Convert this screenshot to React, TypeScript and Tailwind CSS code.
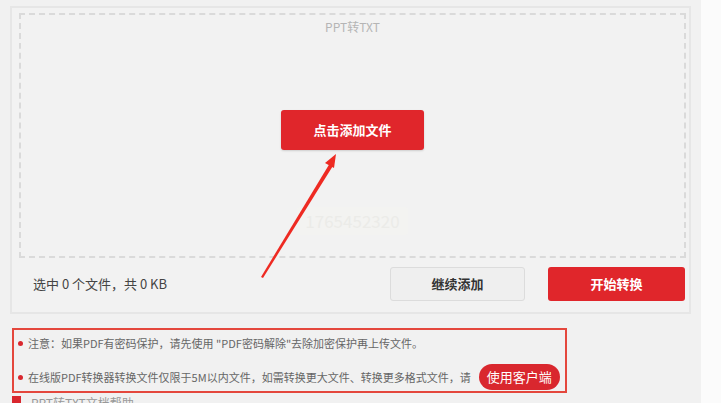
import React from 'react';

const cjk = { fontFamily: '"Microsoft YaHei", "Noto Sans CJK SC", "Noto Sans", sans-serif' };

function Arrow() {
  return (
    <svg className="pointer-events-none absolute left-0 top-0" width="721" height="403" viewBox="0 0 721 403">
      <path d="M261 277 L330 163 L333.5 165 L263 278 Z" fill="#ee2a22" />
      <path d="M336 154 L325 163 L334 168 Z" fill="#ee2a22" />
    </svg>
  );
}

export default function App() {
  return (
    <div className="relative flex h-[403px] w-[721px] overflow-hidden bg-[#f1f1f1]" style={cjk}>
      <div className="w-[701px] pl-[10px] pt-[6px]">
        {/* main panel */}
        <div className="flex h-[308px] w-[681px] flex-col border-2 border-[#e6e6e6] bg-[#f2f2f2] pl-[7px] pr-[3px] pt-[5px]">
          <div className="relative flex h-[245px] w-[667px] flex-col items-center border-2 border-dashed border-[#dadada]">
            <div className="mt-[3px] text-[12px] leading-[18px] text-[#b5b5b5]">PPT转TXT</div>
            <button className="mt-[74px] h-[40px] w-[143px] rounded-[3px] bg-[#e0262b] text-[13px] font-bold text-white shadow-[0_1px_2px_rgba(0,0,0,0.15)]">
              点击添加文件
            </button>
            <div className="mt-[57px] rounded-[3px] bg-[#f3f3f1] px-[8px] text-[17px] leading-[28px] text-[#ebebe8]">1765452320</div>
          </div>
          <div className="flex flex-1 items-center pb-[2px]">
            <span className="ml-[14px] text-[13px] text-[#444]">选中 0 个文件，共 0 KB</span>
            <button className="ml-auto h-[34px] w-[135px] rounded-[3px] border border-[#dcdcdc] bg-[#efefef] text-[13px] font-bold text-[#333]">
              继续添加
            </button>
            <button className="ml-[23px] mr-[1px] h-[34px] w-[137px] rounded-[3px] bg-[#e0262b] text-[13px] font-bold text-white">
              开始转换
            </button>
          </div>
        </div>

        {/* notice */}
        <div className="ml-[2px] mt-[14px] flex h-[65px] w-[555px] flex-col justify-between border-2 border-[#e4473d] pb-[1px] pl-[4px] pt-[3px] text-[11px] text-[#666]">
          <div className="mt-[2px] flex items-center gap-[5px] whitespace-nowrap">
            <span className="h-[5px] w-[5px] shrink-0 rounded-full bg-[#d9272e]" />
            <span>注意：如果PDF有密码保护，请先使用 "PDF密码解除"去除加密保护再上传文件。</span>
          </div>
          <div className="flex items-center gap-[5px] whitespace-nowrap">
            <span className="h-[5px] w-[5px] shrink-0 rounded-full bg-[#d9272e]" />
            <span>在线版PDF转换器转换文件仅限于5M以内文件，如需转换更大文件、转换更多格式文件，请</span>
            <span className="ml-[3px] flex h-[26px] w-[81px] shrink-0 items-center justify-center rounded-full bg-[#d9272e] text-[13px] text-white">
              使用客户端
            </span>
          </div>
        </div>

        <div className="ml-[2px] mt-[3px] flex h-[8px] items-start gap-[10px] overflow-hidden">
          <span className="h-[10px] w-[9px] shrink-0 bg-[#d9272e]" />
          <span className="text-[12px] leading-[14px] text-[#999]">PPT转TXT文档帮助</span>
        </div>
      </div>
      <div className="flex-1 bg-[#fbfbfb]" />
      <Arrow />
    </div>
  );
}
